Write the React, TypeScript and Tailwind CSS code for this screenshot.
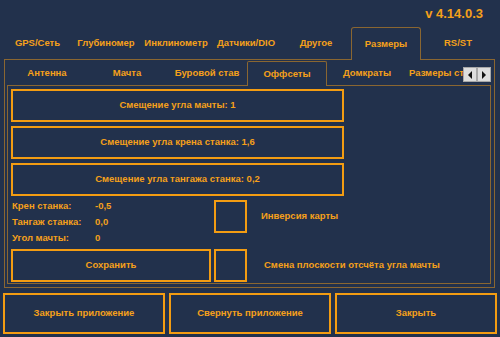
import React from 'react';

const topTabs = ['GPS/Сеть', 'Глубиномер', 'Инклинометр', 'Датчики/DIO', 'Другое', 'Размеры', 'RS/ST'];
const topWidths = ['w-[67px]', 'w-[70px]', 'w-[70px]', 'w-[70px]', 'w-[70px]', 'w-[70px]', 'flex-1'];
const subTabs = ['Антенна', 'Мачта', 'Буровой став', 'Оффсеты', 'Домкраты', 'Размеры станка'];

const readings = [
  { label: 'Крен станка:', value: '-0,5' },
  { label: 'Тангаж станка:', value: '0,0' },
  { label: 'Угол мачты:', value: '0' },
];

function OrangeBox({ className = '', children }: { className?: string; children?: React.ReactNode }) {
  return (
    <div className={`border-2 border-[#f39c12] flex items-center justify-center ${className}`}>
      {children}
    </div>
  );
}

export default function App() {
  return (
    <div className="w-[500px] h-[337px] bg-[#22314c] overflow-hidden flex flex-col text-[#f5a01a] font-bold text-[9.5px] font-['Liberation_Sans',sans-serif]">
      {/* version */}
      <div className="h-[27px] flex items-center justify-end pr-[17px] text-[13px]">v 4.14.0.3</div>

      {/* top tabs */}
      <div className="ml-[4px] w-[491px] h-[33px] flex">
        {topTabs.map((t, i) =>
          t === 'Размеры' ? (
            <div key={t} className={`${topWidths[i]} border-x border-t border-[#8a6631] rounded-t-[3px] flex items-center justify-center`}>
              {t}
            </div>
          ) : (
            <div key={t} className={`${topWidths[i]} border-b border-[#8a6631] flex items-center justify-center`}>
              {t}
            </div>
          )
        )}
      </div>

      {/* outer panel */}
      <div className="ml-[4px] w-[491px] h-[228px] border-x border-b border-[#8a6631] pl-[2px] pr-[3px] pt-[1px] pb-[3px] flex flex-col">
        {/* sub tabs */}
        <div className="relative h-[25px] flex overflow-hidden">
          {subTabs.map((t) =>
            t === 'Оффсеты' ? (
              <div key={t} className="w-[80px] shrink-0 border-x border-t border-[#8a6631] rounded-t-[2px] flex items-center justify-center">
                {t}
              </div>
            ) : (
              <div key={t} className="w-[80px] shrink-0 border-b border-[#8a6631] flex items-center justify-center whitespace-nowrap">
                {t}
              </div>
            )
          )}
          <div className="flex-1 border-b border-[#8a6631]" />
          <div className="absolute right-0 top-[6px] flex">
            <div className="w-[14px] h-[15px] bg-[#dedede] border border-[#a8a8a8] flex items-center justify-center">
              <svg width="6" height="8" viewBox="0 0 6 8"><polygon points="5,0 5,8 1,4" fill="#111" /></svg>
            </div>
            <div className="w-[14px] h-[15px] bg-[#dedede] border border-[#a8a8a8] flex items-center justify-center">
              <svg width="6" height="8" viewBox="0 0 6 8"><polygon points="1,0 1,8 5,4" fill="#111" /></svg>
            </div>
          </div>
        </div>

        {/* sub panel */}
        <div className="flex-1 border-x border-b border-[#8a6631] pl-[3px] pt-[3px] flex flex-col">
          <div className="flex flex-col gap-[4px]">
            <OrangeBox className="w-[333px] h-[33px]">Смещение угла мачты: 1</OrangeBox>
            <OrangeBox className="w-[333px] h-[33px]">Смещение угла крена станка: 1,6</OrangeBox>
            <OrangeBox className="w-[333px] h-[33px]">Смещение угла тангажа станка: 0,2</OrangeBox>
          </div>

          <div className="h-[53px] flex">
            <div className="w-[203px] pt-[2px] pl-[1px]">
              {readings.map((r) => (
                <div key={r.label} className="h-[16px] flex items-center">
                  <span className="w-[83px]">{r.label}</span>
                  <span>{r.value}</span>
                </div>
              ))}
            </div>
            <OrangeBox className="w-[33px] h-[33px] mt-[4px]" />
            <div className="h-[33px] mt-[4px] ml-[14px] flex items-center">Инверсия карты</div>
          </div>

          <div className="h-[33px] flex">
            <OrangeBox className="w-[200px] h-[33px]">Сохранить</OrangeBox>
            <OrangeBox className="w-[33px] h-[33px] ml-[3px]" />
            <div className="ml-[17px] flex items-center">Смена плоскости отсчёта угла мачты</div>
          </div>
        </div>
      </div>

      {/* bottom buttons */}
      <div className="mt-[5px] px-[3px] flex gap-[4px]">
        <OrangeBox className="w-[162px] h-[41px]">Закрыть приложение</OrangeBox>
        <OrangeBox className="w-[162px] h-[41px]">Свернуть приложение</OrangeBox>
        <OrangeBox className="w-[162px] h-[41px]">Закрыть</OrangeBox>
      </div>
    </div>
  );
}
